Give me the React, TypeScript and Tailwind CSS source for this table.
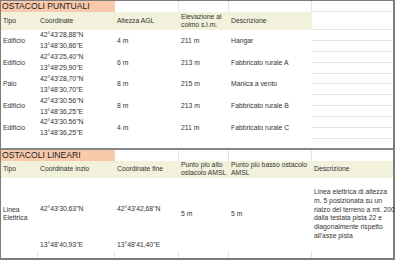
const puntuali = [
  { tipo: "Edificio", n: "42°43'28,88\"N", e: "13°48'30,86\"E", agl: "4 m", slm: "211 m", desc: "Hangar" },
  { tipo: "Edificio", n: "42°43'25,40\"N", e: "13°48'29,90\"E", agl: "6 m", slm: "213 m", desc: "Fabbricato rurale A" },
  { tipo: "Palo", n: "42°43'28,70\"N", e: "13°48'30,70\"E", agl: "8 m", slm: "215 m", desc: "Manica a vento" },
  { tipo: "Edificio", n: "42°43'30.56\"N", e: "13°48'36,25\"E", agl: "8 m", slm: "213 m", desc: "Fabbricato rurale B" },
  { tipo: "Edificio", n: "42°43'30.56\"N", e: "13°48'36,25\"E", agl: "4 m", slm: "211 m", desc: "Fabbricato rurale C" },
];

const descLines = [
  "Linea elettrica di altezza",
  "m. 5 posizionata su un",
  "rialzo del terreno a mt. 200",
  "dalla testata pista 22 e",
  "diagonalmente rispetto",
  "all'asse pista",
];

const cell = "flex items-center pl-[2px] whitespace-nowrap";
const grid = "border-[#e4e4e4]";

export default function App() {
  return (
    <div className="w-[396px] h-[262px] bg-white font-['Liberation_Sans',Arial,sans-serif] text-[6.8px] text-[#333]">
      <div className="w-[395px] border-l border-t border-r-2 border-b-2 border-[#7c7c7c]">
        {/* Ostacoli puntuali */}
        <div className="grid grid-cols-[37px_77px_64px_50px_83px_81px] grid-rows-[11px_18px_repeat(10,10.9px)_9px]">
          <div className="col-span-2 flex items-center pl-[1px] bg-[#f8c9ab] text-[8.6px] text-[#222] whitespace-nowrap">
            OSTACOLI PUNTUALI
          </div>
          <div className={`border-r ${grid}`} />
          <div className={`border-r ${grid}`} />
          <div className={`border-r ${grid}`} />
          <div className={`border-b ${grid}`} />

          <div className={`${cell} bg-[#f2f2dc]`}>Tipo</div>
          <div className={`${cell} bg-[#f2f2dc]`}>Coordinate</div>
          <div className={`${cell} bg-[#f2f2dc]`}>Altezza AGL</div>
          <div className={`${cell} bg-[#f2f2dc] leading-[8.2px]`}>
            Elevazione al
            <br />
            colmo s.l.m.
          </div>
          <div className={`${cell} bg-[#f2f2dc]`}>Descrizione</div>
          <div className={`border-b ${grid}`} />

          {puntuali.map((p, i) => [
            <div key={`t${i}`} className={`${cell} row-span-2`}>{p.tipo}</div>,
            <div key={`n${i}`} className={cell}>{p.n}</div>,
            <div key={`a${i}`} className={`${cell} row-span-2`}>{p.agl}</div>,
            <div key={`s${i}`} className={`${cell} row-span-2`}>{p.slm}</div>,
            <div key={`d${i}`} className={`${cell} row-span-2`}>{p.desc}</div>,
            <div key={`g${i}`} className={`border-b ${grid}`} />,
            <div key={`e${i}`} className={cell}>{p.e}</div>,
            <div key={`h${i}`} className={`border-b ${grid}`} />,
          ])}

          <div className="col-span-6" />
        </div>

        <div className="h-[2px] bg-[#868686]" />

        {/* Ostacoli lineari */}
        <div className="grid grid-cols-[37px_77px_64px_50px_83px_81px] grid-rows-[11px_17px_62px_11px_7px]">
          <div className="col-span-2 flex items-center pl-[1px] bg-[#f8c9ab] text-[8.6px] text-[#222] whitespace-nowrap">
            OSTACOLI LINEARI
          </div>
          <div className={`border-r ${grid}`} />
          <div className={`border-r ${grid}`} />
          <div className={`border-r ${grid}`} />
          <div />

          <div className={`${cell} bg-[#f2f2dc]`}>Tipo</div>
          <div className={`${cell} bg-[#f2f2dc]`}>Coordinate inzio</div>
          <div className={`${cell} bg-[#f2f2dc]`}>Coordinate fine</div>
          <div className={`${cell} bg-[#f2f2dc] leading-[8.6px]`}>
            Punto più alto
            <br />
            ostacolo AMSL
          </div>
          <div className={`${cell} bg-[#f2f2dc] leading-[8.6px]`}>
            Punto più basso ostacolo
            <br />
            AMSL
          </div>
          <div className={`${cell} bg-[#f2f2dc]`}>Descrizione</div>

          <div className={`${cell} row-span-2 leading-[8.6px]`}>
            Linea
            <br />
            Elettrica
          </div>
          <div className={cell}>42°43'30,63"N</div>
          <div className={cell}>42°43'42,68"N</div>
          <div className={`${cell} row-span-2`}>5 m</div>
          <div className={`${cell} row-span-2`}>5 m</div>
          <div className={`row-span-2 flex flex-col justify-center pl-[2px] leading-[8.66px] whitespace-nowrap`}>
            {descLines.map((l) => (
              <span key={l}>{l}</span>
            ))}
          </div>
          <div className={cell}>13°48'40,93"E</div>
          <div className={cell}>13°48'41,40"E</div>

          <div className={`border-r ${grid}`} />
          <div className={`border-r ${grid}`} />
          <div className={`border-r ${grid}`} />
          <div className={`border-r ${grid}`} />
          <div className={`border-r ${grid}`} />
          <div />
        </div>
      </div>
    </div>
  );
}
